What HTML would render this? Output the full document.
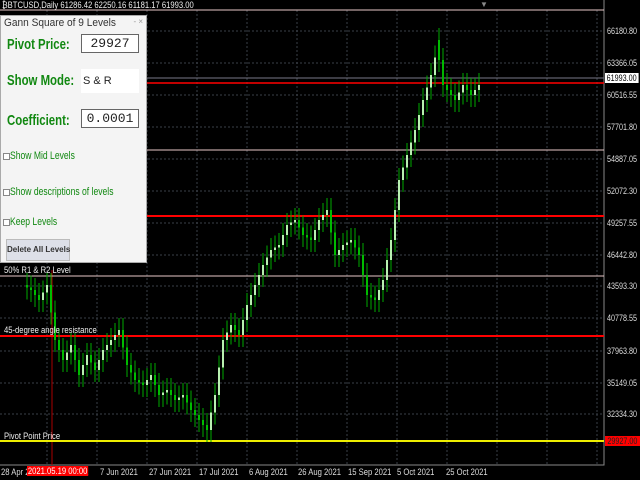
<!DOCTYPE html><html><head><style>
body{margin:0;width:640px;height:480px;background:#000;overflow:hidden;position:relative;font-family:"Liberation Sans",sans-serif}
.ax{position:absolute;left:607px;color:#ddd;font-size:9px;transform:scaleX(.8);transform-origin:left;white-space:nowrap}
.dt{position:absolute;top:467px;color:#ddd;font-size:9px;white-space:nowrap;transform:scaleX(.85);transform-origin:left}
.lbl{position:absolute;left:4px;color:#eee;font-size:9px;white-space:nowrap;transform:scaleX(.85);transform-origin:left}
#pn{position:absolute;left:0;top:15px;width:147px;height:248px;background:#f4f4f4;border:1px solid #aaa;box-sizing:border-box}
.g{position:absolute;color:#118811;font-weight:bold;font-size:15px;white-space:nowrap;transform:scaleX(.76);transform-origin:left}
.c{position:absolute;color:#118811;font-size:11px;left:9px;white-space:nowrap;transform:scaleX(.78);transform-origin:left}
.cb{position:absolute;left:2px;width:5px;height:5px;border:1px solid #888;background:#fff}
.in{position:absolute;left:80px;width:58px;height:19px;background:#fff;border:1px solid #666;box-sizing:border-box;font-family:"Liberation Mono",monospace;font-size:13px;text-align:center;line-height:17px;color:#222}
</style></head><body>
<svg width="640" height="480" style="position:absolute;left:0;top:0">
<g stroke="#3a4048" stroke-dasharray="2,2" stroke-width="1">
<path d="M47 10V465M97 10V465M147 10V465M197 10V465M247 10V465M297 10V465M347 10V465M397 10V465M447 10V465M497 10V465M547 10V465M597 10V465"/>
<path d="M0 31H604M0 63H604M0 95H604M0 127H604M0 159H604M0 191H604M0 223H604M0 255H604M0 286H604M0 318H604M0 351H604M0 383H604M0 414H604"/>
</g>
<path d="M604 0V465H0" stroke="#888" fill="none"/>
<line x1="52" y1="270" x2="52" y2="465" stroke="#a00"/>
<line x1="0" y1="10" x2="604" y2="10" stroke="#e8c8c8"/>
<line x1="0" y1="78" x2="604" y2="78" stroke="#778"/>
<line x1="0" y1="83" x2="604" y2="83" stroke="#f00" stroke-width="1.5"/>
<line x1="0" y1="150" x2="604" y2="150" stroke="#e8c8c8"/>
<line x1="0" y1="216" x2="604" y2="216" stroke="#f00" stroke-width="2"/>
<line x1="0" y1="276" x2="604" y2="276" stroke="#e8c8c8"/>
<line x1="0" y1="336" x2="604" y2="336" stroke="#f00" stroke-width="2"/>
<line x1="0" y1="441" x2="604" y2="441" stroke="#ee0" stroke-width="2"/>
<g id="cs"></g>
</svg>
<script>
var p=[[24,285],[32,290],[40,300],[48,285],[56,340],[64,360],[72,345],[80,375],[88,355],[96,370],[104,350],[112,340],[120,330],[128,365],[136,380],[144,385],[152,375],[160,395],[168,390],[176,400],[184,395],[192,410],[200,420],[208,430],[216,395],[224,340],[232,325],[240,335],[248,305],[256,285],[264,265],[272,250],[280,245],[288,225],[296,220],[304,235],[312,240],[320,220],[328,210],[336,255],[344,245],[352,240],[360,255],[368,295],[376,300],[384,280],[392,240],[400,180],[408,155],[416,130],[424,100],[432,75],[436,40],[440,80],[448,90],[456,100],[464,85],[472,95],[480,85]];
var s='';
for(var i=1;i<p.length;i++){for(var k=0;k<2;k++){var x=p[i-1][0]+4*k+2,a=p[i-1][1]+(p[i][1]-p[i-1][1])*k/2,b=p[i-1][1]+(p[i][1]-p[i-1][1])*(k+1)/2;var t=Math.min(a,b),h=Math.max(Math.abs(a-b),2);
s+='<line x1="'+(x+1)+'" x2="'+(x+1)+'" y1="'+(t-12)+'" y2="'+(t+h+12)+'" stroke="#0a0"/>';
s+='<rect x="'+x+'" y="'+t+'" width="2" height="'+h+'" fill="'+(b<a?'#b8f0b0':'#0b0')+'"/>';}}
document.getElementById('cs').innerHTML=s;
</script>
<div style="position:absolute;left:2px;top:0;color:#eee;font-size:9px;white-space:nowrap;transform:scaleX(.85);transform-origin:left">₿BTCUSD,Daily 61286.42 62250.16 61181.17 61993.00</div>
<div style="position:absolute;left:480px;top:0;color:#888;font-size:8px">▼</div>
<div id="pn">
<div style="position:absolute;left:3px;top:1px;font-size:11px;color:#333;white-space:nowrap;transform:scaleX(.92);transform-origin:left">Gann Square of 9 Levels</div>
<div style="position:absolute;right:3px;top:1px;font-size:8px;color:#999">- ×</div>
<div class="g" style="left:6px;top:20px">Pivot Price:</div><div class="in" style="top:18px">29927</div>
<div class="g" style="left:6px;top:56px">Show Mode:</div><div class="in" style="top:53px;height:24px;border:none;text-align:left;padding-left:2px;font-family:'Liberation Sans';font-size:11px;line-height:24px">S &amp; R</div>
<div class="g" style="left:6px;top:96px">Coefficient:</div><div class="in" style="top:93px">0.0001</div>
<div class="cb" style="top:137px"></div><div class="c" style="top:134px">Show Mid Levels</div>
<div class="cb" style="top:173px"></div><div class="c" style="top:170px">Show descriptions of levels</div>
<div class="cb" style="top:203px"></div><div class="c" style="top:200px">Keep Levels</div>
<div style="position:absolute;left:5px;top:223px;width:62px;height:20px;background:#dde0e8;border:1px solid #bbb;font-size:8px;font-weight:bold;color:#333;line-height:20px;text-align:center;white-space:nowrap">Delete All Levels</div>
</div>
<div class="lbl" style="top:265px">50% R1 &amp; R2 Level</div>
<div class="lbl" style="top:325px">45-degree angle resistance</div>
<div class="lbl" style="top:431px">Pivot Point Price</div>
<div class="ax" style="top:26px">66180.80</div>
<div class="ax" style="top:58px">63366.05</div>
<div class="ax" style="top:73px;background:#fff;color:#000;padding:0 2px;left:605px">61993.00</div>
<div class="ax" style="top:90px">60516.55</div>
<div class="ax" style="top:122px">57701.80</div>
<div class="ax" style="top:154px">54887.05</div>
<div class="ax" style="top:186px">52072.30</div>
<div class="ax" style="top:218px">49257.55</div>
<div class="ax" style="top:250px">46442.80</div>
<div class="ax" style="top:281px">43593.30</div>
<div class="ax" style="top:313px">40778.55</div>
<div class="ax" style="top:346px">37963.80</div>
<div class="ax" style="top:378px">35149.05</div>
<div class="ax" style="top:409px">32334.30</div>
<div class="ax" style="top:436px;background:#f00;color:#222;padding:0 3px;left:605px">29927.00</div>
<div class="dt" style="left:1px">28 Apr 2</div>
<div class="dt" style="left:80px">21</div>
<div class="dt" style="left:27px;background:#f00;color:#fff;padding:0 1px;top:466px">2021.05.19 00:00</div>
<div class="dt" style="left:100px">7 Jun 2021</div>
<div class="dt" style="left:149px">27 Jun 2021</div>
<div class="dt" style="left:199px">17 Jul 2021</div>
<div class="dt" style="left:249px">6 Aug 2021</div>
<div class="dt" style="left:298px">26 Aug 2021</div>
<div class="dt" style="left:348px">15 Sep 2021</div>
<div class="dt" style="left:397px">5 Oct 2021</div>
<div class="dt" style="left:446px">25 Oct 2021</div>
</body></html>
